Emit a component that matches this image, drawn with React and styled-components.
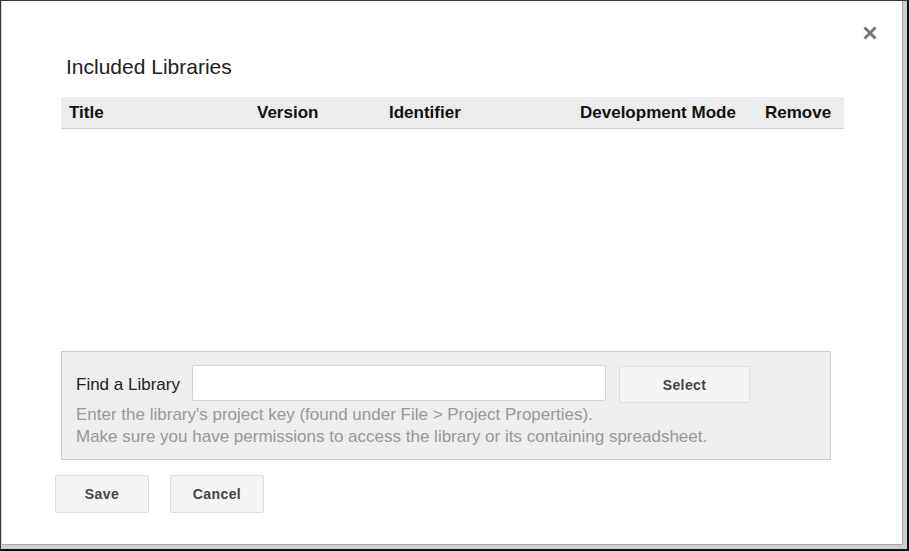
import React from "react";
import styled, { createGlobalStyle } from "styled-components";

const Global = createGlobalStyle`
  html, body { margin: 0; padding: 0; background: #000; }
  body { font-family: "Liberation Sans", Arial, sans-serif; }
  * { box-sizing: border-box; }
`;

const Frame = styled.div`
  width: 909px;
  height: 551px;
  border-top: 1px solid #3a3a3a;
  border-left: 1px solid #3a3a3a;
  border-right: 2px solid #111;
  border-bottom: 2px solid #111;
  background: #cfcfcf;
  padding: 0 4px 4px 1px;
  display: flex;
`;

const Dialog = styled.div`
  flex: 1;
  background: #fff;
  border-right: 1px solid #a8a8a8;
  border-bottom: 1px solid #a8a8a8;
  position: relative;
  display: flex;
  flex-direction: column;
  padding: 0 58px 0 52px;
`;

const Close = styled.div`
  position: absolute;
  top: 22px;
  right: 22px;
  width: 20px;
  height: 20px;
  display: flex;
  align-items: center;
  justify-content: center;
`;

const Title = styled.h1`
  margin: 52px 0 0 12px;
  font-size: 21px;
  font-weight: normal;
  color: #222;
  line-height: 27px;
  height: 27px;
`;

const TableHead = styled.div`
  margin: 17px 0 0 7px;
  height: 32px;
  background: #ececec;
  border-bottom: 1px solid #d0d0d0;
  display: grid;
  grid-template-columns: 188px 132px 191px 185px 1fr;
  align-items: center;
`;

const Th = styled.div`
  padding-left: 8px;
  font-size: 17px;
  font-weight: bold;
  color: #111;
  white-space: nowrap;
`;

const TableBody = styled.div`
  height: 222px;
  margin-left: 7px;
`;

const FindPanel = styled.div`
  margin: 0 13px 0 7px;
  height: 109px;
  background: #eeeeee;
  border: 1px solid #cccccc;
  padding: 13px 14px 0 14px;
`;

const FindRow = styled.div`
  display: flex;
  align-items: flex-start;
`;

const Label = styled.span`
  font-size: 17px;
  line-height: 36px;
  margin-top: 2px;
  color: #222;
  width: 116px;
`;

const Input = styled.input`
  width: 414px;
  height: 36px;
  border: 1px solid #d4d4d4;
  border-radius: 2px;
  background: #fff;
  outline: none;
  font-family: inherit;
  font-size: 15px;
`;

const Button = styled.button`
  height: ${(p) => p.$h || 37}px;
  width: ${(p) => p.$w}px;
  margin-left: ${(p) => p.$ml || 0}px;
  margin-top: ${(p) => p.$mt || 0}px;
  background: #f4f4f4;
  border: 1px solid #dcdcdc;
  border-radius: 2px;
  font-family: inherit;
  font-weight: bold;
  font-size: 14px;
  letter-spacing: 0.4px;
  color: #444;
  padding: 0;
`;

const Help = styled.div`
  font-size: 17px;
  line-height: 22px;
  color: #999;
  margin-top: 1px;
`;

const Footer = styled.div`
  display: flex;
  gap: 21px;
  margin-top: 15px;
  margin-left: 1px;
`;

export default function App() {
  return (
    <>
      <Global />
      <Frame>
        <Dialog>
          <Close>
            <svg width="16" height="16" viewBox="0 0 16 16">
              <path d="M2.5 2.5 L13.5 13.5 M13.5 2.5 L2.5 13.5" stroke="#777" strokeWidth="3" strokeLinecap="butt" />
            </svg>
          </Close>
          <Title>Included Libraries</Title>
          <TableHead>
            <Th>Title</Th>
            <Th>Version</Th>
            <Th>Identifier</Th>
            <Th>Development Mode</Th>
            <Th>Remove</Th>
          </TableHead>
          <TableBody />
          <FindPanel>
            <FindRow>
              <Label>Find a Library</Label>
              <Input type="text" />
              <Button $w={131} $ml={13} $mt={1}>Select</Button>
            </FindRow>
            <Help>
              Enter the library's project key (found under File &gt; Project Properties).
              <br />
              Make sure you have permissions to access the library or its containing spreadsheet.
            </Help>
          </FindPanel>
          <Footer>
            <Button $w={94} $h={38}>Save</Button>
            <Button $w={94} $h={38}>Cancel</Button>
          </Footer>
        </Dialog>
      </Frame>
    </>
  );
}
